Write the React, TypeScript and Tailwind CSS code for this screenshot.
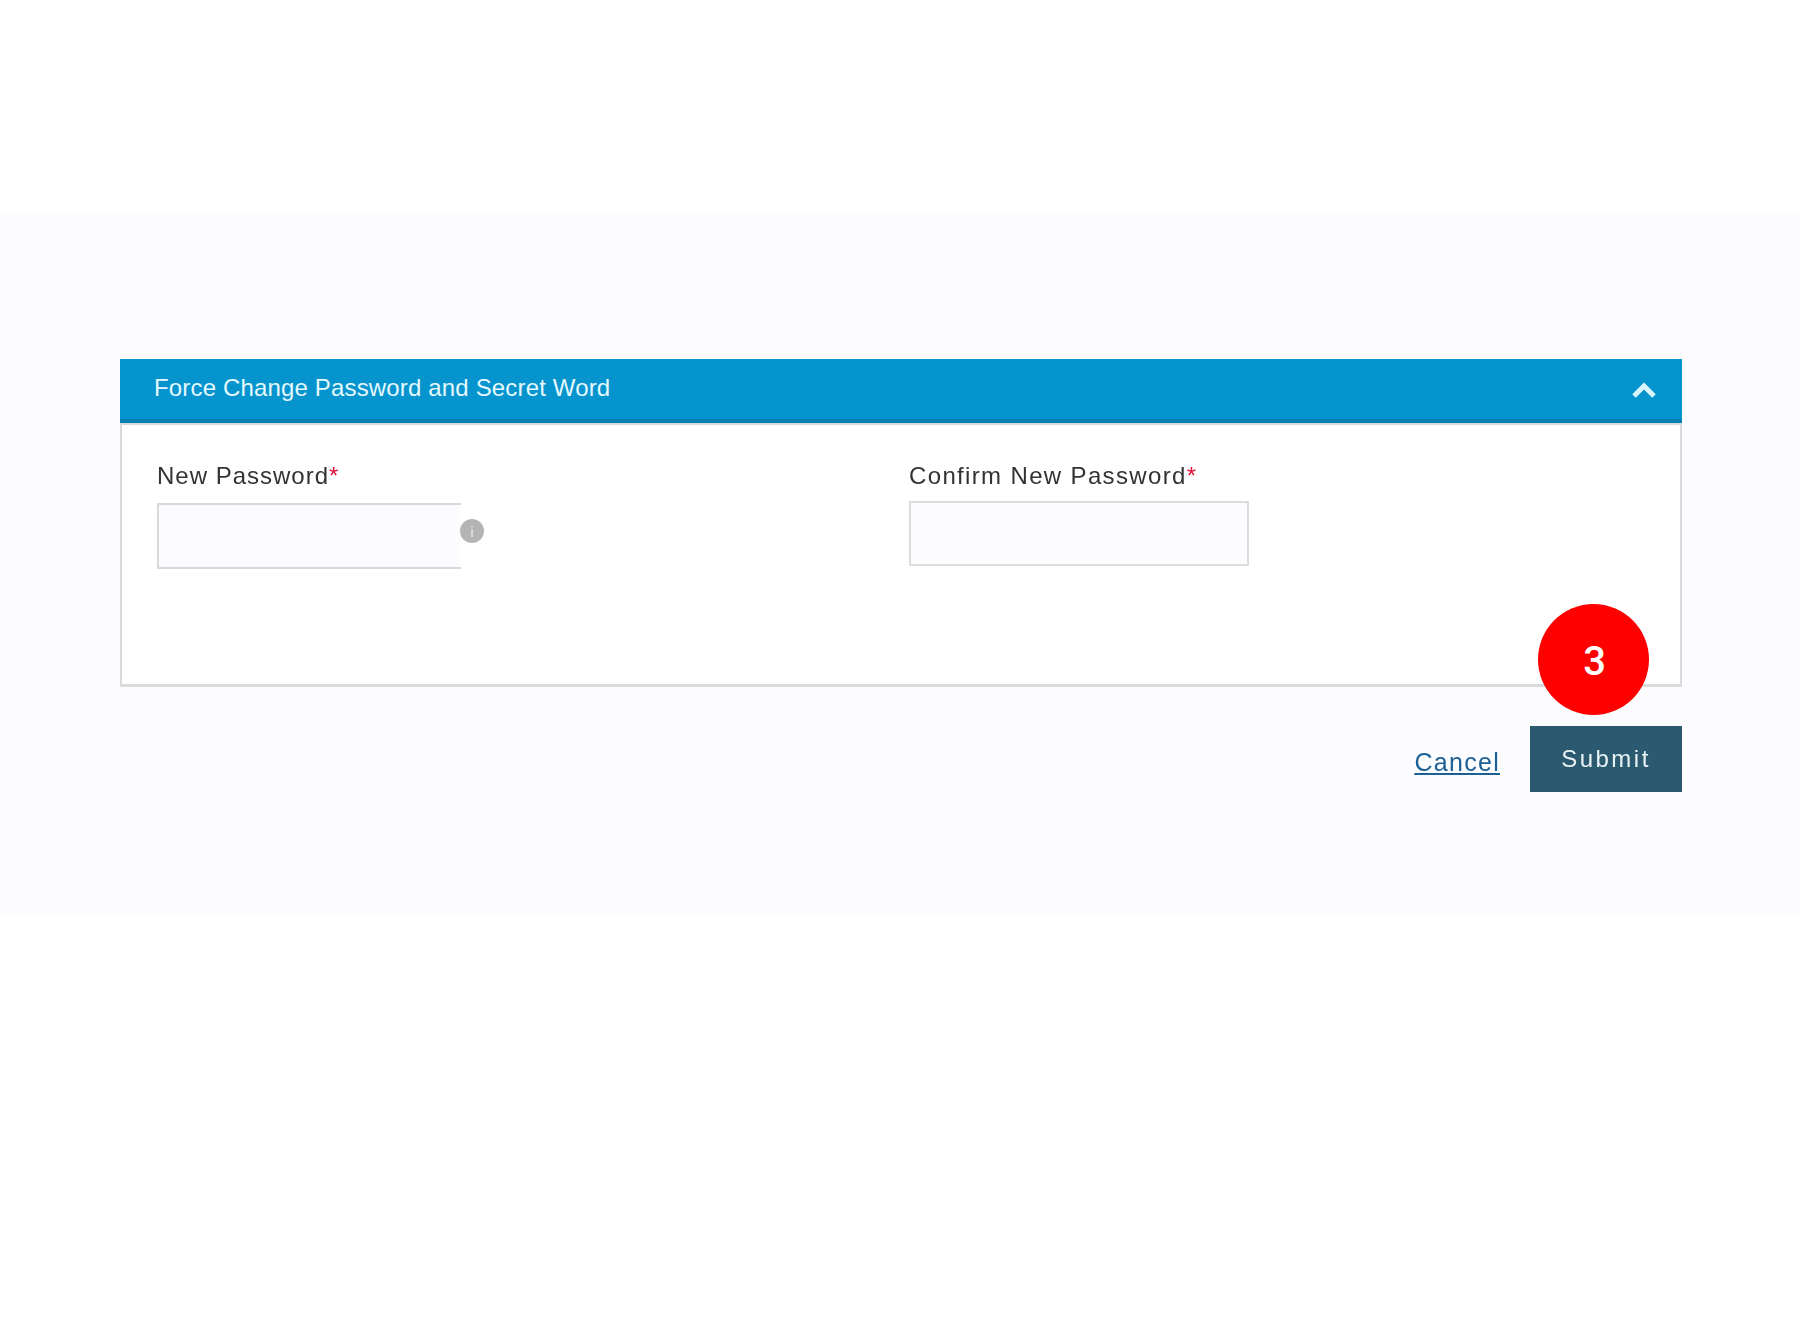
export default function App() {
  return (
    <div className="w-[1800px] h-[1320px] bg-white pt-[213px] font-['Liberation_Sans',Arial,sans-serif]">
      <div className="relative h-[701px] bg-[#fcfcff] pl-[120px] pr-[118px] pt-[146px]">
        <div className="blur-[0.5px]">
          <div className="flex h-[64px] items-start justify-between border-b-[4px] border-[#0480b4] bg-[#0594cd] pl-[34px] pr-[25px] pt-[14px]">
            <span className="text-[24px] leading-[30px] tracking-[0.16px] text-[#e4f8fd]">Force Change Password and Secret Word</span>
            <svg className="mt-[8px]" width="26" height="18" viewBox="0 0 26 18" fill="none">
              <path d="M3 15 L13 5 L23 15" stroke="#d8f6fc" strokeWidth="5" />
            </svg>
          </div>
          <div className="h-[264px] border-x-[2px] border-b-[3px] border-t-[2px] border-[#dadadc] bg-white pl-[35px] pt-[36px]">
            <div className="flex items-start">
              <div className="w-[752px]">
                <div className="text-[24px] leading-[30px] tracking-[1px] text-[#333333]">
                  New Password<span className="text-[#e0103a]">*</span>
                </div>
                <div className="mt-[12px] flex items-center">
                  <div className="h-[66px] w-[304px] border-y-[2px] border-l-[2px] border-[#d8d8da] bg-[#fcfcfe]" />
                  <div className="-ml-[1px] -mt-[10px] flex h-[24px] w-[24px] items-center justify-center rounded-full bg-[#b4b4b4] text-[15px] font-bold leading-none text-[#d8d8d8]">i</div>
                </div>
              </div>
              <div>
                <div className="text-[24px] leading-[30px] tracking-[1.35px] text-[#333333]">
                  Confirm New Password<span className="text-[#e0103a]">*</span>
                </div>
                <div className="mt-[10px] h-[65px] w-[340px] border-[2px] border-[#dcdcde] bg-[#fcfcfe]" />
              </div>
            </div>
          </div>
          <div className="mt-[39px] flex items-center justify-end gap-[30px]">
            <a className="mt-[5px] text-[25px] leading-[30px] tracking-[1.3px] text-[#1a5f96] underline" href="#">Cancel</a>
            <button className="h-[66px] w-[152px] bg-[#2b5a70] text-[24px] tracking-[2.5px] text-[#e8f2f4]">Submit</button>
          </div>
        </div>
        <div className="absolute left-[1538px] top-[391px] flex h-[111px] w-[111px] items-center justify-center rounded-full bg-[#fe0000] pl-[2px] pt-[4px] font-['Roboto',sans-serif] text-[40px] font-medium leading-none text-white">3</div>
      </div>
    </div>
  );
}
